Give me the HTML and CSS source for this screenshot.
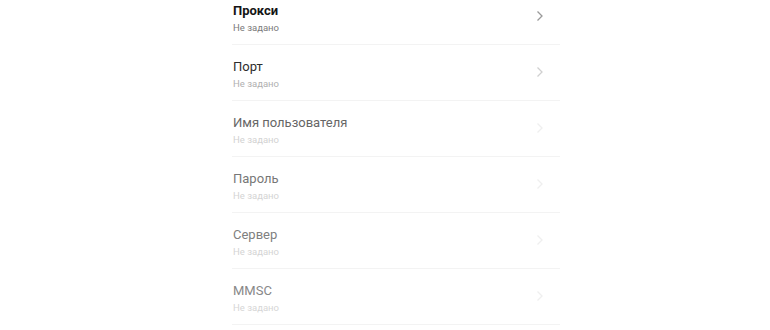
FILE: index.html
```html
<!DOCTYPE html>
<html lang="ru">
<head>
<meta charset="utf-8">
<link rel="stylesheet" href="styles.css">
</head>
<body>
<div class="list">
  <div class="row r1">
    <div class="text"><div class="title">Прокси</div><div class="sub">Не задано</div></div>
    <svg class="chev" viewBox="0 0 8 12" width="8" height="12"><path d="M1.5 1.5 L6 6 L1.5 10.5" fill="none" stroke="currentColor" stroke-width="1.3"/></svg>
  </div>
  <div class="row r2">
    <div class="text"><div class="title">Порт</div><div class="sub">Не задано</div></div>
    <svg class="chev" viewBox="0 0 8 12" width="8" height="12"><path d="M1.5 1.5 L6 6 L1.5 10.5" fill="none" stroke="currentColor" stroke-width="1.3"/></svg>
  </div>
  <div class="row r3">
    <div class="text"><div class="title">Имя пользователя</div><div class="sub">Не задано</div></div>
    <svg class="chev" viewBox="0 0 8 12" width="8" height="12"><path d="M1.5 1.5 L6 6 L1.5 10.5" fill="none" stroke="currentColor" stroke-width="1.3"/></svg>
  </div>
  <div class="row r4">
    <div class="text"><div class="title">Пароль</div><div class="sub">Не задано</div></div>
    <svg class="chev" viewBox="0 0 8 12" width="8" height="12"><path d="M1.5 1.5 L6 6 L1.5 10.5" fill="none" stroke="currentColor" stroke-width="1.3"/></svg>
  </div>
  <div class="row r5">
    <div class="text"><div class="title">Сервер</div><div class="sub">Не задано</div></div>
    <svg class="chev" viewBox="0 0 8 12" width="8" height="12"><path d="M1.5 1.5 L6 6 L1.5 10.5" fill="none" stroke="currentColor" stroke-width="1.3"/></svg>
  </div>
  <div class="row r6">
    <div class="text"><div class="title">MMSC</div><div class="sub">Не задано</div></div>
    <svg class="chev" viewBox="0 0 8 12" width="8" height="12"><path d="M1.5 1.5 L6 6 L1.5 10.5" fill="none" stroke="currentColor" stroke-width="1.3"/></svg>
  </div>
</div>
</body>
</html>
```
FILE: styles.css
```css
html, body { margin: 0; padding: 0; background: #fff; }
body { width: 770px; height: 330px; overflow: hidden; font-family: Roboto, "Noto Sans", "Liberation Sans", sans-serif; }
.list { margin: -11px 0 0 232px; width: 328px; }
.row {
  height: 56px;
  box-sizing: border-box;
  border-bottom: 1px solid #f3f3f3;
  display: flex;
  align-items: center;
  justify-content: space-between;
  padding: 3px 16px 0 1px;
}
.title { font-size: 13px; line-height: 17px; }
.sub { font-size: 9.5px; line-height: 13px; margin-top: 2px; }
.chev { display: block; margin-top: -5px; }
.r1 .title { color: #151515; font-weight: 700; }
.r1 .sub { color: #7a7a7a; }
.r1 .chev { color: #9a9a9a; }
.r2 .title { color: #2e2e2e; }
.r2 .sub { color: #b0b0b0; }
.r2 .chev { color: #d0d0d0; }
.r3 .title { color: #666; }
.r3 .sub { color: #d2d2d2; }
.r3 .chev { color: #efefef; }
.r4 .title { color: #777; }
.r4 .sub { color: #d4d4d4; }
.r4 .chev { color: #efefef; }
.r5 .title { color: #808080; }
.r5 .sub { color: #d4d4d4; }
.r5 .chev { color: #efefef; }
.r6 .title { color: #888; }
.r6 .sub { color: #d6d6d6; }
.r6 .chev { color: #efefef; }
```
